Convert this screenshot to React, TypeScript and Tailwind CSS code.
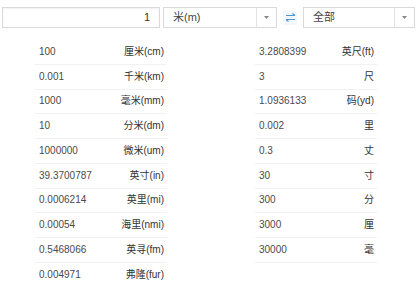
import React from 'react';

const left: [string, string][] = [
  ['100', '厘米(cm)'],
  ['0.001', '千米(km)'],
  ['1000', '毫米(mm)'],
  ['10', '分米(dm)'],
  ['1000000', '微米(um)'],
  ['39.3700787', '英寸(in)'],
  ['0.0006214', '英里(mi)'],
  ['0.00054', '海里(nmi)'],
  ['0.5468066', '英寻(fm)'],
  ['0.004971', '弗隆(fur)'],
];

const right: [string, string][] = [
  ['3.2808399', '英尺(ft)'],
  ['3', '尺'],
  ['1.0936133', '码(yd)'],
  ['0.002', '里'],
  ['0.3', '丈'],
  ['30', '寸'],
  ['300', '分'],
  ['3000', '厘'],
  ['30000', '毫'],
];

const Caret = () => (
  <span className="flex w-[20px] items-center justify-center border-l border-[#e3e3e3]">
    <svg width="5" height="3" viewBox="0 0 5 3">
      <path d="M0 0h5L2.5 3z" fill="#888" />
    </svg>
  </span>
);

const Column = ({ rows }: { rows: [string, string][] }) => (
  <div className="flex flex-col">
    {rows.map(([v, u], i) => (
      <div
        key={i}
        className="flex h-[24.75px] items-center justify-between border-b border-[#f1f1f1] pl-[4px] pr-[3px]"
      >
        <span className="text-[#4a4a4a]">{v}</span>
        <span className="text-[#333]">{u}</span>
      </div>
    ))}
  </div>
);

export default function App() {
  return (
    <div
      className="h-[285px] w-[420px] overflow-hidden bg-white text-[10px] leading-none"
      style={{ fontFamily: '"Liberation Sans", Arial, "Noto Sans CJK SC", sans-serif' }}
    >
      <div className="mt-[7px] flex h-[21px] items-stretch pl-[2px]">
        <div className="flex w-[158px] items-center justify-end border border-[#d9d9d9] pr-[9px] text-[11px] text-[#333] shadow-[inset_0_1px_2px_rgba(0,0,0,0.06)]">
          1
        </div>
        <div className="ml-[3px] flex w-[114px] border border-[#d9d9d9]">
          <span className="flex flex-1 items-center pl-[9px] text-[11px] text-[#444]">米(m)</span>
          <Caret />
        </div>
        <div className="mx-[5px] flex w-[16px] items-center justify-center">
          <span className="flex h-[14px] w-[14px] items-center justify-center bg-[#f2f8fd]">
            <svg width="11" height="9" viewBox="0 0 11 9" fill="none" stroke="#4a97da" strokeWidth="1.2">
              <path d="M1 2.5h9M7.5 0.5l2.5 2" />
              <path d="M10 6.5H1M3.5 8.5L1 6.5" />
            </svg>
          </span>
        </div>
        <div className="flex w-[112px] border border-[#d9d9d9]">
          <span className="flex flex-1 items-center pl-[9px] text-[11px] text-[#444]">全部</span>
          <Caret />
        </div>
      </div>
      <div className="mt-[12px] grid grid-cols-[132px_122px] gap-x-[88px] pl-[35px]">
        <Column rows={left} />
        <Column rows={right} />
      </div>
    </div>
  );
}
